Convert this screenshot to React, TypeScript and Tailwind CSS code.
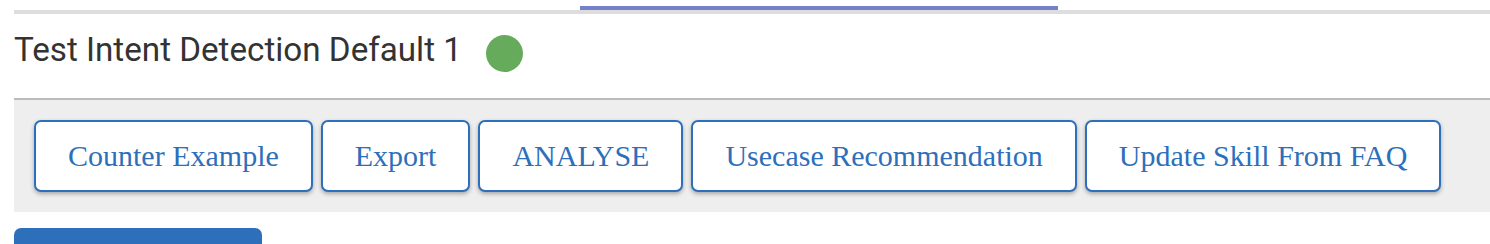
export default function App() {
  const actions = [
    "Counter Example",
    "Export",
    "ANALYSE",
    "Usecase Recommendation",
    "Update Skill From FAQ",
  ];

  return (
    <div className="min-h-[244px] bg-white pl-[14px]">
      {/* tab strip */}
      <div className="ml-[566px] mt-[6px] h-[4px] w-[478px] bg-[#7481c9]" />
      <div className="h-[4px] bg-[#dddddd]" />

      {/* heading */}
      <div className="flex h-[86px] items-center border-b-2 border-[#bbbbbb]">
        <h1 className="-mt-[12px] font-['Roboto',sans-serif] text-[33.2px] font-normal leading-none text-[#333333]">
          Test Intent Detection Default 1
        </h1>
        <span className="-mt-[5px] ml-[24px] h-[37px] w-[37px] rounded-full bg-[#66ab5b]" />
      </div>

      {/* actions */}
      <div className="flex gap-[8px] bg-[#eeeeee] px-[20px] py-[20px]">
        {actions.map((label) => (
          <button
            key={label}
            type="button"
            className="flex h-[72px] items-center rounded-[7px] border-2 border-[#2d6fba] bg-white px-[32px] font-['Liberation_Serif',serif] text-[30px] leading-none text-[#2d6fba] shadow-[0_2px_4px_rgba(0,0,0,0.3)]"
          >
            {label}
          </button>
        ))}
      </div>

      <div className="mt-[16px] h-[40px] w-[248px] rounded-t-[7px] bg-[#2d6fba]" />
    </div>
  );
}
